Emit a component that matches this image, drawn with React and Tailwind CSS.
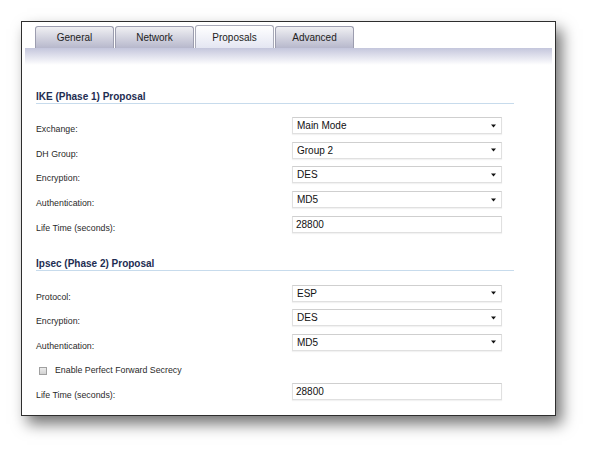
const tabs = ["General", "Network", "Proposals", "Advanced"];

function Tab({ label, active }) {
  return (
    <div
      className={
        active
          ? "w-[79px] h-[23px] -mt-px flex items-center justify-center rounded-t-[3px] border border-b-0 border-[#a9aab8] bg-gradient-to-b from-white to-[#e4e6f2] text-[10px] text-[#222]"
          : "w-[79px] h-[22px] flex items-center justify-center rounded-t-[3px] border border-b-0 border-[#9c9daf] bg-gradient-to-b from-[#f0f0f3] to-[#b7b8cc] text-[10px] text-[#222]"
      }
    >
      {label}
    </div>
  );
}

function Heading({ children, className }) {
  return (
    <div
      className={`w-[478px] h-[13px] leading-[12px] border-b border-[#c7dbec] text-[10px] font-bold text-[#1e2d52] ${className}`}
    >
      {children}
    </div>
  );
}

function Select({ value }) {
  return (
    <div className="w-[210px] h-[17px] flex items-center justify-between pl-[4px] pr-[5px] bg-white border border-[#e0e0e0] border-t-[#cfcfcf] shadow-[0_1px_1px_rgba(0,0,0,0.05)] text-[10px] text-[#111]">
      <span>{value}</span>
      <svg width="5" height="4" viewBox="0 0 5 4">
        <path d="M0 0.5 L5 0.5 L2.5 3.5 Z" fill="#111" />
      </svg>
    </div>
  );
}

function Input({ value }) {
  return (
    <div className="w-[210px] h-[17px] flex items-center pl-[3px] bg-white border border-[#e0e0e0] border-t-[#cfcfcf] shadow-[0_1px_1px_rgba(0,0,0,0.05)] text-[10px] text-[#111]">
      {value}
    </div>
  );
}

function Row({ label, children }) {
  return (
    <div className="flex items-center h-[17px]">
      <div className="w-[256px] mt-[8px] text-[8.8px] text-[#2a2a2a]">{label}</div>
      {children}
    </div>
  );
}

export default function App() {
  return (
    <div
      className="w-[597px] h-[458px] bg-white p-[21px]"
      style={{ fontFamily: '"Liberation Sans", Arial, sans-serif' }}
    >
      <div className="w-[535px] h-[395px] border border-[#2e2e2e] bg-white shadow-[6px_8px_14px_rgba(0,0,0,0.55)]">
        <div className="flex gap-px pl-[13px] pt-[4px] items-end">
          {tabs.map((t) => (
            <Tab key={t} label={t} active={t === "Proposals"} />
          ))}
        </div>
        <div className="mx-[3px] h-[17px] bg-gradient-to-b from-[#c4c6dc] to-white" />

        <div className="pl-[14px]">
          <Heading className="mt-[26px]">IKE (Phase 1) Proposal</Heading>
          <div className="mt-[13px] flex flex-col gap-[7.7px]">
            <Row label="Exchange:">
              <Select value="Main Mode" />
            </Row>
            <Row label="DH Group:">
              <Select value="Group 2" />
            </Row>
            <Row label="Encryption:">
              <Select value="DES" />
            </Row>
            <Row label="Authentication:">
              <Select value="MD5" />
            </Row>
            <Row label="Life Time (seconds):">
              <Input value="28800" />
            </Row>
          </div>

          <Heading className="mt-[25px]">Ipsec (Phase 2) Proposal</Heading>
          <div className="mt-[14px] flex flex-col gap-[7.5px]">
            <Row label="Protocol:">
              <Select value="ESP" />
            </Row>
            <Row label="Encryption:">
              <Select value="DES" />
            </Row>
            <Row label="Authentication:">
              <Select value="MD5" />
            </Row>
            <div className="h-[17px] flex items-center">
              <div className="mt-[8px] flex items-center text-[8.8px] text-[#2a2a2a]">
                <span className="ml-[3px] w-[8px] h-[8px] border border-[#a0a0a0] bg-gradient-to-b from-[#ececec] to-[#d2d2d2]" />
                <span className="ml-[8px]">Enable Perfect Forward Secrecy</span>
              </div>
            </div>
            <Row label="Life Time (seconds):">
              <Input value="28800" />
            </Row>
          </div>
        </div>
      </div>
    </div>
  );
}
